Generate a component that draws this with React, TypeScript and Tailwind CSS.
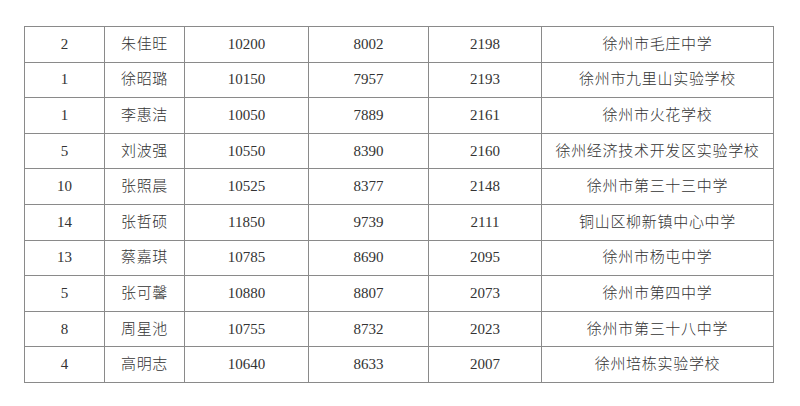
const rows = [
  ['2', '朱佳旺', '10200', '8002', '2198', '徐州市毛庄中学'],
  ['1', '徐昭璐', '10150', '7957', '2193', '徐州市九里山实验学校'],
  ['1', '李惠洁', '10050', '7889', '2161', '徐州市火花学校'],
  ['5', '刘波强', '10550', '8390', '2160', '徐州经济技术开发区实验学校'],
  ['10', '张照晨', '10525', '8377', '2148', '徐州市第三十三中学'],
  ['14', '张哲硕', '11850', '9739', '2111', '铜山区柳新镇中心中学'],
  ['13', '蔡嘉琪', '10785', '8690', '2095', '徐州市杨屯中学'],
  ['5', '张可馨', '10880', '8807', '2073', '徐州市第四中学'],
  ['8', '周星池', '10755', '8732', '2023', '徐州市第三十八中学'],
  ['4', '高明志', '10640', '8633', '2007', '徐州培栋实验学校'],
];

const widths = ['w-[80px]', 'w-[80px]', 'w-[124px]', 'w-[120px]', 'w-[113px]', 'w-[232px]'];

export default function App() {
  return (
    <div className="min-h-[406px] w-[800px] bg-white pt-[26px] pl-[24px]">
      <table className="table-fixed border-collapse border border-[#8a8a8a] text-[15px] text-[#333333] [font-family:'Liberation_Serif','Noto_Sans_CJK_SC',serif]">
        <tbody>
          {rows.map((row, i) => (
            <tr key={i} className="h-[35.6px]">
              {row.map((cell, j) => (
                <td
                  key={j}
                  className={`${widths[j]} border border-[#8a8a8a] p-0 text-center leading-none ${j === 1 || j === 5 ? 'tracking-[0.7px] font-light' : ''}`}
                >
                  {cell}
                </td>
              ))}
            </tr>
          ))}
        </tbody>
      </table>
    </div>
  );
}
